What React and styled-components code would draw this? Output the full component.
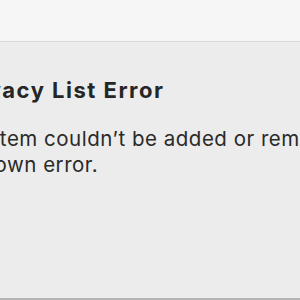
import React from "react";
import styled, { createGlobalStyle } from "styled-components";

const GlobalStyle = createGlobalStyle`
  html, body {
    margin: 0;
    padding: 0;
    width: 300px;
    height: 300px;
    overflow: hidden;
    background: #ececec;
    font-family: Inter, "Liberation Sans", sans-serif;
  }
`;

const Window = styled.div`
  width: 300px;
  height: 300px;
  display: flex;
  flex-direction: column;
  background: #ececec;
  overflow: hidden;
`;

const TitleBar = styled.div`
  height: 41px;
  flex: none;
  background: #f6f6f6;
  border-bottom: 1px solid #d8d8d8;
`;

const Body = styled.div`
  flex: 1;
  padding-top: 34px;
  margin-left: -46px;
  border-bottom: 2px solid #b4b4b4;
`;

const Title = styled.h1`
  margin: 0;
  font-size: 22px;
  font-weight: 700;
  letter-spacing: 1.5px;
  color: #262626;
  white-space: nowrap;
  line-height: 28px;
`;

const Message = styled.p`
  margin: 22px 0 0 -9px;
  font-size: 20.5px;
  letter-spacing: 0.5px;
  line-height: 26px;
  color: #2a2a2a;
  white-space: nowrap;
`;

export default function App() {
  return (
    <>
      <GlobalStyle />
      <Window>
        <TitleBar />
        <Body>
          <Title>Privacy List Error</Title>
          <Message>
            This item couldn’t be added or removed because of an
            <br />
            unknown error.
          </Message>
        </Body>
      </Window>
    </>
  );
}
